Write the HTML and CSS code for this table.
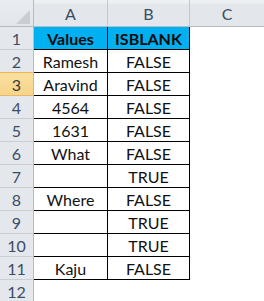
FILE: index.html
```html
<!DOCTYPE html>
<html>
<head>
<meta charset="utf-8">
<link rel="stylesheet" href="styles.css">
</head>
<body>
<div class="sheet">
  <div class="corner"><span class="tri"></span></div>
  <div class="hc">A</div><div class="hc">B</div><div class="hc last">C</div>

  <div class="rh">1</div><div class="c hd">Values</div><div class="c hd">ISBLANK</div><div class="e"></div>
  <div class="rh pre">2</div><div class="c">Ramesh</div><div class="c">FALSE</div><div class="e"></div>
  <div class="rh sel">3</div><div class="c">Aravind</div><div class="c">FALSE</div><div class="e"></div>
  <div class="rh">4</div><div class="c">4564</div><div class="c">FALSE</div><div class="e"></div>
  <div class="rh">5</div><div class="c">1631</div><div class="c">FALSE</div><div class="e"></div>
  <div class="rh">6</div><div class="c">What</div><div class="c">FALSE</div><div class="e"></div>
  <div class="rh">7</div><div class="c"></div><div class="c">TRUE</div><div class="e"></div>
  <div class="rh">8</div><div class="c">Where</div><div class="c">FALSE</div><div class="e"></div>
  <div class="rh">9</div><div class="c"></div><div class="c">TRUE</div><div class="e"></div>
  <div class="rh">10</div><div class="c"></div><div class="c">TRUE</div><div class="e"></div>
  <div class="rh">11</div><div class="c">Kaju</div><div class="c">FALSE</div><div class="e"></div>
  <div class="rh">12</div><div class="e"></div><div class="e"></div><div class="e"></div>
</div>
</body>
</html>
```
FILE: styles.css
```css
html, body {
  margin: 0;
  padding: 0;
  background: #ffffff;
  overflow: hidden;
}
.sheet {
  display: grid;
  grid-template-columns: 34px 74px 82px 74px;
  grid-template-rows: 27px repeat(12, 23px);
  font-family: Lato, "Open Sans", sans-serif;
  font-size: 16px;
}
.sheet > div {
  box-sizing: border-box;
  display: flex;
  align-items: center;
  justify-content: center;
  line-height: 1;
}
.corner {
  position: relative;
  background: linear-gradient(#e9ecf0, #e2e6eb);
  border-right: 1px solid #b7bcc3;
  border-bottom: 1px solid #b7bcc3;
}
.tri {
  position: absolute;
  right: 3px;
  bottom: 2px;
  width: 0;
  height: 0;
  border-left: 14px solid transparent;
  border-bottom: 14px solid #c9ced5;
}
.hc {
  background: linear-gradient(#edf0f3 0, #edf0f3 3px, #e3e7ec 4px, #e3e7ec 100%);
  border-right: 1px solid #c3c8ce;
  border-bottom: 1px solid #b7bcc3;
  color: #3a4d63;
  padding-top: 1px;
}
.hc.last {
  border-right: none;
}
.rh {
  background: #e4e8ed;
  border-right: 1px solid #b7bcc3;
  border-bottom: 1px solid #c9ced4;
  color: #3a4d63;
  padding-top: 2px;
}
.rh.pre {
  border-bottom: 1px solid #efb24c;
}
.rh.sel {
  background: linear-gradient(#f9df9f, #f7d48a);
  border-bottom: 1px solid #e7b867;
  color: #3a3a3a;
}
.c {
  border-right: 1px solid #000000;
  border-bottom: 1px solid #000000;
  color: #111111;
  padding-top: 2px;
}
.c.hd {
  background: #00b0f0;
  font-weight: bold;
  color: #0a0a0a;
}
.e {
  background: #ffffff;
}
```
